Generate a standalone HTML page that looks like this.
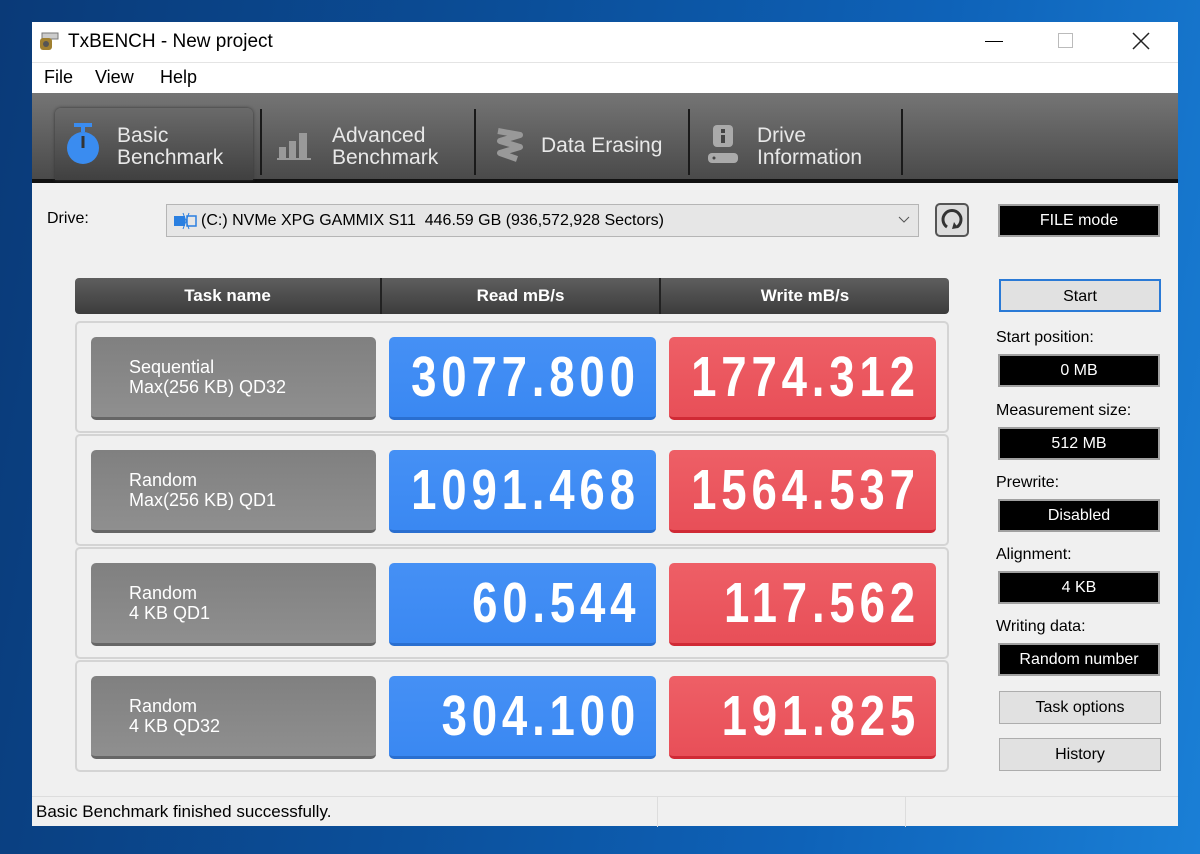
<!DOCTYPE html>
<html><head><meta charset="utf-8"><style>
*{margin:0;padding:0;box-sizing:border-box}
body{width:1200px;height:854px;overflow:hidden;position:relative;font-family:"Liberation Sans",sans-serif;
background:linear-gradient(100deg,#0a3a78 0%,#0b4f9a 40%,#0e62b8 70%,#1a7fd6 100%);}
.abs{position:absolute}
#win{left:32px;top:22px;width:1146px;height:804px;background:#f0f0f0;}
#title{left:0;top:0;width:1146px;height:40px;background:#fff;font-size:19px;color:#000}
#menu{left:0;top:40px;width:1146px;height:31px;background:#fff;font-size:18px;border-top:1px solid #e4e4e4}
#tool{left:0;top:71px;width:1146px;height:90px;background:linear-gradient(#757575,#4a4a4a);border-bottom:4px solid #111}
.tab{color:#e8e8e8;font-size:21px;line-height:22px}
.sep{width:2px;height:66px;background:#1a1a1a;top:16px}
.hdr{left:43px;top:256px;width:874px;height:36px;border-radius:4px;background:linear-gradient(#5e5e5e,#3c3c3c);color:#fff;font-weight:bold;font-size:17px}
.hdr div{position:absolute;top:0;height:36px;line-height:36px;text-align:center}
.row{left:43px;width:874px;height:112px;border:2px solid #d4d4d4;border-radius:5px;background:#f0f0f0}
.tn{position:absolute;left:14px;top:14px;width:285px;height:83px;border-radius:5px;background:linear-gradient(#808080,#8f8f8f);border-bottom:3px solid #666;color:#fff;font-size:18px;line-height:20px;padding:20px 0 0 38px}
.rd,.wr{position:absolute;top:14px;width:267px;height:83px;border-radius:5px;color:#fff;font-weight:bold;font-size:57px;line-height:81px;overflow:hidden}
.rd span,.wr span{position:absolute;right:16px;top:0;white-space:nowrap;transform:scaleX(0.8);transform-origin:right center;letter-spacing:6px}
.rd{left:312px;background:linear-gradient(#4590f5,#3a88f2);border-bottom:3px solid #2a6fd0}
.wr{left:592px;background:linear-gradient(#ee5f66,#e84f58);border-bottom:3px solid #d02a35}
.lbl{font-size:16px;color:#000;left:964px}
.blk{left:966px;width:162px;height:33px;background:#000;border:2px solid #a0a0a0;color:#fff;font-size:16px;text-align:center;line-height:29px}
.btn{left:967px;width:162px;height:33px;background:#e1e1e1;border:1px solid #adadad;font-size:16px;text-align:center;line-height:31px}
</style></head><body>
<div id="win" class="abs">
 <div id="title" class="abs">
  <svg class="abs" style="left:6px;top:10px" width="22" height="20"><rect x="4" y="1" width="16" height="6" fill="#ccc" stroke="#777"/><rect x="2" y="6" width="12" height="12" rx="3" fill="#a08030"/><circle cx="8" cy="12" r="3" fill="#555"/></svg>
  <div class="abs" style="left:36px;top:9px">TxBENCH - New project</div>
  <div class="abs" style="left:953px;top:19px;width:18px;height:1px;background:#000"></div>
  <div class="abs" style="left:1026px;top:11px;width:15px;height:15px;border:1px solid #bbb"></div>
  <svg class="abs" style="left:1100px;top:10px" width="18" height="18"><path d="M1 1L17 17M17 1L1 17" stroke="#222" stroke-width="1.5"/></svg>
 </div>
 <div id="menu" class="abs"><span class="abs" style="left:12px;top:4px">File</span><span class="abs" style="left:63px;top:4px">View</span><span class="abs" style="left:128px;top:4px">Help</span></div>
 <div id="tool" class="abs">
  <div class="abs" style="left:23px;top:15px;width:198px;height:72px;border-radius:6px 6px 0 0;background:linear-gradient(#6a6a6a,#404040);box-shadow:0 0 3px #333"></div>
  <svg class="abs" style="left:34px;top:29px" width="36" height="46"><rect x="8" y="1" width="18" height="4" fill="#3a8cf0"/><rect x="15" y="4" width="4" height="6" fill="#3a8cf0"/><circle cx="17" cy="26" r="16" fill="#3a8cf0"/><rect x="15.5" y="14" width="3" height="12" fill="#333"/></svg>
  <div class="abs tab" style="left:85px;top:32px">Basic<br>Benchmark</div>
  <div class="abs sep" style="left:228px"></div>
  <svg class="abs" style="left:245px;top:36px" width="36" height="32"><rect x="2" y="18" width="7" height="12" fill="#999"/><rect x="12" y="12" width="7" height="18" fill="#999"/><rect x="22" y="4" width="8" height="26" fill="#999"/><rect x="0" y="29" width="34" height="2" fill="#999"/></svg>
  <div class="abs tab" style="left:300px;top:32px">Advanced<br>Benchmark</div>
  <div class="abs sep" style="left:442px"></div>
  <svg class="abs" style="left:463px;top:34px" width="30" height="38"><path d="M3 4L25 8L5 14L25 20L5 26L22 32" stroke="#999" stroke-width="6" fill="none" stroke-linejoin="round"/></svg>
  <div class="abs tab" style="left:509px;top:42px">Data Erasing</div>
  <div class="abs sep" style="left:656px"></div>
  <svg class="abs" style="left:676px;top:32px" width="32" height="40"><rect x="5" y="0" width="20" height="22" rx="4" fill="#aaa"/><rect x="13" y="4" width="4" height="4" fill="#444"/><rect x="13" y="10" width="4" height="8" fill="#444"/><rect x="0" y="28" width="30" height="10" rx="4" fill="#aaa"/><circle cx="6" cy="33" r="1.5" fill="#444"/></svg>
  <div class="abs tab" style="left:725px;top:32px">Drive<br>Information</div>
  <div class="abs sep" style="left:869px"></div>
 </div>
 <div class="abs" style="left:15px;top:188px;font-size:16px">Drive:</div>
 <div class="abs" style="left:134px;top:182px;width:753px;height:33px;border:1px solid #b5b5b5;background:#e6e6e6;font-size:16px;line-height:31px;padding-left:34px">(C:) NVMe XPG GAMMIX S11&nbsp; 446.59 GB (936,572,928 Sectors)
  <svg class="abs" style="left:6px;top:7px" width="26" height="18"><rect x="1" y="4" width="11" height="10" fill="#2a7fe0"/><rect x="14" y="4" width="9" height="10" fill="none" stroke="#2a7fe0" stroke-width="1.5"/><path d="M10 1L16 17M16 1L10 17" stroke="#2a7fe0"/></svg>
  <svg class="abs" style="left:731px;top:11px" width="12" height="8"><path d="M1 1L6 6L11 1" stroke="#555" fill="none"/></svg>
 </div>
 <div class="abs" style="left:903px;top:181px;width:34px;height:34px;border:2px solid #555;border-radius:5px;background:#ddd"><svg width="30" height="30"><path d="M10 22A9 9 0 1 1 20 22" stroke="#333" stroke-width="3" fill="none"/><path d="M17 17L21 23L15 24Z" fill="#333"/></svg></div>
 <div class="abs blk" style="top:182px">FILE mode</div>
 <div class="abs hdr"><div style="left:0;width:305px">Task name</div><div style="left:305px;width:279px;border-left:2px solid #222">Read mB/s</div><div style="left:584px;width:290px;border-left:2px solid #222">Write mB/s</div></div>
 <div class="abs row" style="top:299px"><div class="tn">Sequential<br>Max(256 KB) QD32</div><div class="rd"><span>3077.800</span></div><div class="wr"><span>1774.312</span></div></div>
 <div class="abs row" style="top:412px"><div class="tn">Random<br>Max(256 KB) QD1</div><div class="rd"><span>1091.468</span></div><div class="wr"><span>1564.537</span></div></div>
 <div class="abs row" style="top:525px"><div class="tn">Random<br>4 KB QD1</div><div class="rd"><span>60.544</span></div><div class="wr"><span>117.562</span></div></div>
 <div class="abs row" style="top:638px"><div class="tn">Random<br>4 KB QD32</div><div class="rd"><span>304.100</span></div><div class="wr"><span>191.825</span></div></div>
 <div class="abs btn" style="top:257px;border:2px solid #2a7ad6">Start</div>
 <div class="abs lbl" style="top:307px">Start position:</div>
 <div class="abs blk" style="top:332px">0 MB</div>
 <div class="abs lbl" style="top:380px">Measurement size:</div>
 <div class="abs blk" style="top:405px">512 MB</div>
 <div class="abs lbl" style="top:452px">Prewrite:</div>
 <div class="abs blk" style="top:477px">Disabled</div>
 <div class="abs lbl" style="top:524px">Alignment:</div>
 <div class="abs blk" style="top:549px">4 KB</div>
 <div class="abs lbl" style="top:596px">Writing data:</div>
 <div class="abs blk" style="top:621px">Random number</div>
 <div class="abs btn" style="top:669px">Task options</div>
 <div class="abs btn" style="top:716px">History</div>
 <div class="abs" style="left:0;top:774px;width:1146px;height:30px;border-top:1px solid #ddd;font-size:17px;line-height:30px;padding-left:4px">Basic Benchmark finished successfully.
  <div class="abs" style="left:625px;top:0;width:1px;height:30px;background:#ddd"></div>
  <div class="abs" style="left:873px;top:0;width:1px;height:30px;background:#ddd"></div>
 </div>
</div>
</body></html>
